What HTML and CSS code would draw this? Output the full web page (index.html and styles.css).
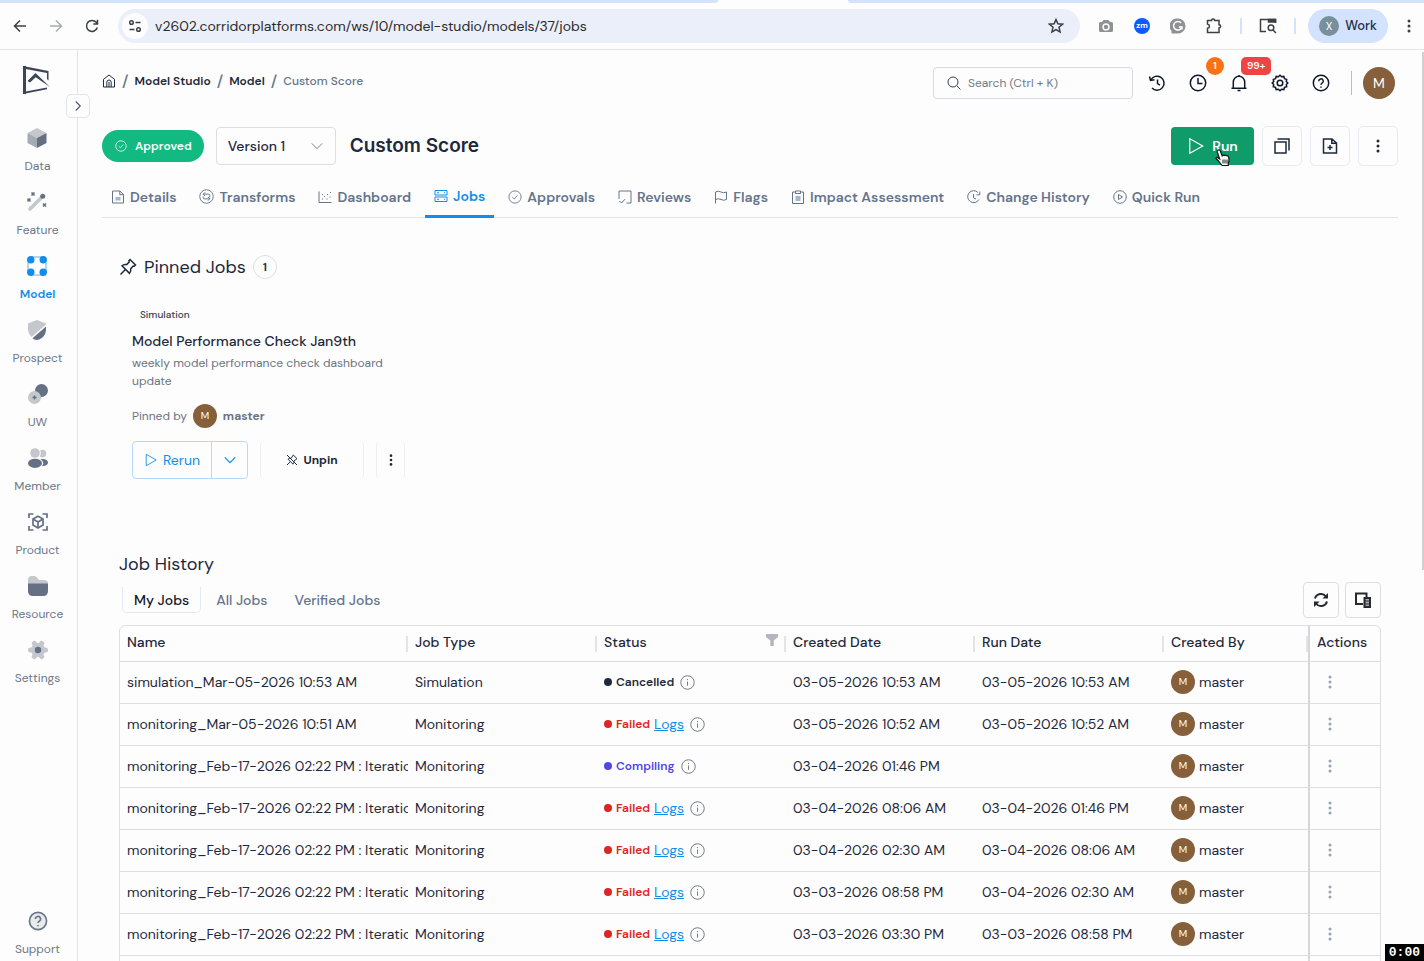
FILE: index.html
```html
<!DOCTYPE html>
<html lang="en">
<head>
    <meta charset="UTF-8">
    <meta name="viewport" content="width=device-width, initial-scale=1.0">
    <title>Custom Score - Jobs</title>
    <link rel="stylesheet" href="styles.css">
</head>
<body>
    <!-- Shared icons -->
    <svg class="sprite" aria-hidden="true">
        <symbol id="i-dots" viewBox="0 0 16 16"><g fill="currentColor" stroke="none"><circle cx="8" cy="3" r="1.5"/><circle cx="8" cy="8" r="1.5"/><circle cx="8" cy="13" r="1.5"/></g></symbol>
        <symbol id="i-info" viewBox="0 0 16 16"><circle cx="8" cy="8" r="7.200"/><path d="M8 7v4.500M8 4.300v1.200"/></symbol>
        <symbol id="i-check" viewBox="0 0 16 16"><circle cx="8" cy="8" r="7"/><path d="M5 8.300l2.200 2 3.800-4.300"/></symbol>
        <symbol id="i-play" viewBox="0 0 16 16"><path d="M2.500 1.500v13L14 8z"/></symbol>
        <symbol id="i-chevron" viewBox="0 0 16 16"><path d="M2 5l6 6 6-6"/></symbol>
        <symbol id="i-help" viewBox="0 0 18 18"><circle cx="9" cy="9" r="7.700"/><path d="M6.700 7.200a2.300 2.300 0 1 1 3.400 2c-.8.500-1.100.8-1.100 1.600M9 12.500v1.300"/></symbol>
        <symbol id="i-pin" viewBox="0 0 18 18"><path d="M11 1.500l5.500 5.500-1.300 1.200-.9-.2-2.600 2.700c.4 1.800 0 3.300-1.200 4.600L3 7.800c1.300-1.200 2.800-1.600 4.600-1.200L10.200 4 9.900 2.700zM6.400 11.500L1.500 16.500"/></symbol>
    </svg>

    <!-- Browser bar -->
    <div class="tab-strip"><span class="strip-left"></span><span class="strip-tab"></span><span class="strip-right"></span></div>
    <div class="toolbar">
        <button class="tool-btn" aria-label="Back"><svg class="icon s16 bold" viewBox="0 0 16 16"><path d="M14 8H2.500M8 2.500L2.500 8 8 13.500"/></svg></button>
        <button class="tool-btn dim" aria-label="Forward"><svg class="icon s16 bold" viewBox="0 0 16 16"><path d="M2 8h11.500M8 2.500L13.500 8 8 13.500"/></svg></button>
        <button class="tool-btn" aria-label="Reload"><svg class="icon s16 bold" viewBox="0 0 16 16"><path d="M13.300 9.500A5.500 5.500 0 1 1 12.200 4.300L13.500 5.800M13.500 1.800v4.200H9.300"/></svg></button>
        <div class="address">
            <span class="site-info"><svg class="icon s16 bold" viewBox="0 0 16 16"><circle cx="4.500" cy="4.500" r="1.800"/><path d="M8.500 4.500h5M2.500 11.500h5"/><circle cx="11.500" cy="11.500" r="1.800"/></svg></span>
            <input class="url" type="text" aria-label="Address" value="v2602.corridorplatforms.com/ws/10/model-studio/models/37/jobs">
            <svg class="icon s16 bold" viewBox="0 0 16 16"><path d="M8 1.500l1.900 4.300 4.700.4-3.600 3.100 1.100 4.600L8 11.500l-4.100 2.400L5 9.300 1.400 6.200l4.700-.4z"/></svg>
        </div>
        <div class="extensions">
            <button class="tool-btn" aria-label="Screenshot"><svg class="s16" viewBox="0 0 16 16"><path fill="#8f9194" fill-rule="evenodd" d="M5.500 2h5L12 4h1.500Q15 4 15 5.500v7q0 1.500-1.500 1.500h-11Q1 14 1 12.500v-7Q1 4 2.500 4H4zM8 5.200a3.700 3.700 0 1 0 0 7.400 3.700 3.700 0 0 0 0-7.400z"/><circle cx="8" cy="9" r="2.200" fill="#8f9194"/></svg></button>
            <button class="tool-btn" aria-label="Zoom"><span class="zoom-logo">zm</span></button>
            <button class="tool-btn" aria-label="Grammar"><svg class="s16" viewBox="0 0 16 16"><path fill="#8f9194" d="M8 .5A7.500 7.500 0 1 1 8 15.500H1.500V13A7.500 7.500 0 0 1 8 .5z"/><path fill="none" stroke="#fff" stroke-width="1.500" d="M11.200 5A4.300 4.300 0 1 0 12 9H8.800M12 9v2.500"/></svg></button>
            <button class="tool-btn" aria-label="Extensions"><svg class="icon s18 bold" viewBox="0 0 18 18"><path d="M2.500 3.500h4a1.600 1.600 0 0 1 3.200 0H14v4.200a1.600 1.600 0 0 1 0 3.200v4.600H2.500v-4.200c2.600-.4 2.600-3.700 0-4.200z"/></svg></button>
            <span class="tool-sep"></span>
            <button class="tool-btn" aria-label="Search tabs"><svg class="icon s18 bold" viewBox="0 0 18 18"><path d="M7 14.500H1.500v-12h15V6"/><path d="M9.500 2.500h7V5h-7z" fill="currentColor"/><circle cx="12" cy="10.800" r="2.800"/><path d="M14 13l3 3"/></svg></button>
            <span class="tool-sep"></span>
            <button class="profile"><span class="profile-pic">X</span>Work</button>
            <button class="tool-btn slim" aria-label="Browser menu"><svg class="icon s16"><use href="#i-dots"/></svg></button>
        </div>
    </div>

    <div class="app">
        <!-- Sidebar -->
        <nav class="sidebar">
            <svg class="logo" viewBox="0 0 28 30"><path fill="none" stroke="#3b4758" stroke-width="3" d="M2.500 1v28"/><path fill="#3b4758" d="M1 1l25.500 5v9.500L25 14V8L1 3.500zM1 27l24-4.500v1.800L1 29zM5.500 16L13.500 8 28 22 13.700 12.200 8 17.500z"/></svg>
            <button class="collapse" aria-label="Expand menu"><svg class="icon s12 turn bold"><use href="#i-chevron"/></svg></button>
            <a class="side-item" href="#">
                <svg class="s20" viewBox="0 0 20 20"><path fill="#c4c7cc" d="M10 0l9.500 5L10 10 .5 5z"/><path fill="#a5abb4" d="M.5 5L10 10v10L.5 15z"/><path fill="#667085" d="M19.500 5L10 10v10l9.500-5z"/></svg>
                Data
            </a>
            <a class="side-item" href="#">
                <svg class="s20" viewBox="0 0 20 20"><path stroke="#c4c7cc" stroke-width="3.600" stroke-linecap="round" d="M3 17L14 6"/><circle cx="15.700" cy="4.300" r="2.500" fill="#667085"/><path stroke="#667085" stroke-width="1.600" d="M4.500.5l3 3M7.500.5l-3 3M.5 6.500l3 3M3.500 6.500l-3 3M16 11.500l3 3M19 11.500l-3 3"/></svg>
                Feature
            </a>
            <a class="side-item active" href="#">
                <svg class="s20" viewBox="0 0 20 20"><path fill="none" stroke="#93c9f5" stroke-width="1.500" d="M3.500 1h13M3.500 19h13M1 4v12M19 4v12"/><g fill="#118dea"><circle cx="3.800" cy="3.800" r="3.700"/><circle cx="16.200" cy="3.800" r="3.700"/><circle cx="3.800" cy="16.200" r="3.700"/><circle cx="16.200" cy="16.200" r="3.700"/></g></svg>
                Model
            </a>
            <a class="side-item" href="#">
                <svg class="s20" viewBox="0 0 20 20"><path fill="#c4c7cc" d="M10 0l8 3q1 .4 1 1.500L4.500 17C1.500 14 1 11 1 9V4.500Q1 3.400 2 3z"/><path fill="#667085" d="M19 6.500V9c0 5-3 10-9 11-2 0-3.500-.8-4.500-1.700z"/></svg>
                Prospect
            </a>
            <a class="side-item" href="#">
                <svg class="s20" viewBox="0 0 20 20"><circle cx="13.500" cy="6.500" r="6.500" fill="#667085"/><circle cx="6.500" cy="13.500" r="6.500" fill="#c4c7cc"/><path stroke="#667085" stroke-width="1.400" d="M6.500 11.500v4M4.500 13.500h4"/></svg>
                UW
            </a>
            <a class="side-item" href="#">
                <svg class="s20" viewBox="0 0 20 20"><circle cx="14.500" cy="5.500" r="3.800" fill="#c4c7cc"/><ellipse cx="15" cy="14.500" rx="5" ry="3.600" fill="#667085"/><ellipse cx="7" cy="15.300" rx="8.200" ry="5.500" fill="#fdfdfd"/><circle cx="7" cy="5" r="5.800" fill="#fdfdfd"/><circle cx="7" cy="5" r="4.800" fill="#c4c7cc"/><ellipse cx="7" cy="15.300" rx="7" ry="4.600" fill="#667085"/></svg>
                Member
            </a>
            <a class="side-item" href="#">
                <svg class="s20" viewBox="0 0 20 20" fill="none" stroke="#667085" stroke-width="1.700"><path d="M1 6V2h4.500M14.500 2H19v4M19 14v4h-4.500M5.500 18H1v-4"/><path d="M10 4.200l5 2.800v6l-5 2.900L5 13V7z"/><path d="M5 7l5 3 5-3M10 10v6"/></svg>
                Product
            </a>
            <a class="side-item" href="#">
                <svg class="s20" viewBox="0 0 20 20"><path fill="#c4c7cc" d="M0 8V4q0-4 4-4h2.500q1.500 0 2.500 1.500L11 4h5q4 0 4 4z"/><path fill="#667085" d="M0 7.500h20V15q0 5-5 5H5q-5 0-5-5z"/></svg>
                Resource
            </a>
            <a class="side-item" href="#">
                <svg class="s20" viewBox="0 0 20 20"><circle cx="10" cy="10" r="7" fill="#c4c7cc"/><path stroke="#c4c7cc" stroke-width="5" stroke-linecap="round" d="M2.500 10h15M6.300 3.400l7.400 13.200M13.700 3.400L6.300 16.600"/><circle cx="10" cy="10" r="3.200" fill="#667085"/></svg>
                Settings
            </a>
            <a class="side-item support" href="#">
                <svg class="icon s20 help"><use href="#i-help"/></svg>
                Support
            </a>
        </nav>

        <main class="main">
            <div class="topbar">
                <nav class="breadcrumb">
                    <a href="#" aria-label="Home"><svg class="icon s14" viewBox="0 0 14 14"><path d="M1.500 5.300L7 1l5.500 4.300V13h-11zM4.800 13V8.200Q4.800 6 7 6t2.200 2.200V13M7 8v5"/></svg></a>
                    <span class="slash">/</span><a href="#">Model Studio</a>
                    <span class="slash">/</span><a href="#">Model</a>
                    <span class="slash">/</span><span>Custom Score</span>
                </nav>
                <label class="search">
                    <svg class="icon s14" viewBox="0 0 14 14"><circle cx="6" cy="6" r="5"/><path d="M9.800 9.800L13.500 13.500"/></svg>
                    <input type="text" placeholder="Search (Ctrl + K)" aria-label="Search">
                </label>
                <div class="top-icons">
                    <button aria-label="Recent"><svg class="icon s18 bold" viewBox="0 0 18 18"><path d="M2.800 6A7 7 0 1 1 4 14M1.500 2.500L2.500 6.500l4-.7M9.500 5.500v4.200l2.500 1.500"/></svg></button>
                    <button aria-label="Running jobs"><svg class="icon s18 bold" viewBox="0 0 18 18"><circle cx="9" cy="9" r="7.700"/><path d="M9 4v5.500h4.500"/></svg><span class="badge orange">1</span></button>
                    <button aria-label="Notifications"><svg class="icon s18 bold" viewBox="0 0 18 18"><path d="M1.500 14.200h15M3.300 14V8a5.700 5.700 0 0 1 11.400 0v6M9 1v1.500M7.500 16.500h3"/></svg><span class="badge red">99+</span></button>
                    <button aria-label="Settings"><svg class="icon s18 bold" viewBox="0 0 18 18"><path d="M7.400 2.800L9 1.200l1.600 1.600 2.200-.4.700 2.200 2.200.8-.4 2.100L16.800 9l-1.500 1.500.4 2.200-2.200.7-.7 2.200-2.200-.4L9 16.800l-1.600-1.600-2.200.4-.7-2.200-2.200-.7.4-2.200L1.200 9l1.500-1.500-.4-2.100 2.200-.8.700-2.200z"/><circle cx="9" cy="9" r="2.800"/></svg></button>
                    <button aria-label="Help"><svg class="icon s18 bold"><use href="#i-help"/></svg></button>
                </div>
                <span class="avatar large">M</span>
            </div>

            <div class="title-row">
                <span class="approved"><svg class="icon s12"><use href="#i-check"/></svg>Approved</span>
                <div class="version">
                    <select aria-label="Version"><option>Version 1</option></select>
                    <svg class="icon s14"><use href="#i-chevron"/></svg>
                </div>
                <h1>Custom Score</h1>
                <div class="title-actions">
                    <button class="run"><svg class="icon s18"><use href="#i-play"/></svg>Run
                        <svg class="cursor" viewBox="0 0 16 18"><path fill="#fff" stroke="#111" stroke-width="1.200" d="M3 1.200q1.500-.8 2.200.6l2 5q.8-1.300 2-.3 1-.9 2 .2 1.200-.6 2 .6.800 1.500.8 3.500 0 2-.7 3.200v2.500H7L3.500 12 1 9.500q.2-1.700 2-.8l1.600 1.200L2.300 3Q2 1.700 3 1.200z"/><path stroke="#111" d="M8 10.500v4M10 10.500v4M12 10.500v4"/></svg>
                    </button>
                    <button class="square" aria-label="Duplicate"><svg class="icon s16 bold" viewBox="0 0 16 16"><path d="M1 4h11v11H1zM3.500 1H15v11.500"/></svg></button>
                    <button class="square" aria-label="New file"><svg class="icon s16 bold" viewBox="0 0 16 16"><path d="M1.500 1H10l4.500 4v10h-13zM9.800 1v4.200h4.700M8 7v5M5.500 9.500h5"/></svg></button>
                    <button class="square" aria-label="More"><svg class="icon s16"><use href="#i-dots"/></svg></button>
                </div>
            </div>

            <nav class="tabs">
                <a href="#"><svg class="icon s14" viewBox="0 0 14 14"><path d="M1.500 1H9l3.500 3.500V13h-11zM8.800 1v3.700h3.700"/><path d="M4.500 7h5v3.500h-5z" fill="#a9b4c4" stroke="none"/></svg>Details</a>
                <a href="#"><svg class="icon s15" viewBox="0 0 16 16"><circle cx="8" cy="8" r="7.200"/><path d="M6.500 3.500l-2 2 2 2M4.500 5.500h6q1 0 1 1V9M9.500 8.500l2 2-2 2M11.500 10.500h-6q-1 0-1-1V8"/></svg>Transforms</a>
                <a href="#"><svg class="icon s14" viewBox="0 0 14 14"><path d="M1 1.500v11h12.500M4 9h1M6 6.500h1M8.500 9h1M4 4.500h1M9 4.500h1M11.500 7h1M12 2.500h1"/></svg>Dashboard</a>
                <a class="active" href="#"><svg class="icon s14" viewBox="0 0 14 14"><path d="M1 1.500h12V6H1zM1 8h12v4.500H1zM3 3.800h2M10 3.800h1M3 10.300h2M10 10.300h1"/></svg>Jobs</a>
                <a href="#"><svg class="icon s14"><use href="#i-check"/></svg>Approvals</a>
                <a href="#"><svg class="icon s14" viewBox="0 0 14 14"><path d="M1 9V1h12v12H8.500M1.500 11l2 2 3.500-3.800"/></svg>Reviews</a>
                <a href="#"><svg class="icon s14" viewBox="0 0 14 14"><path d="M1.500 13.500V2Q4.500.5 7 2t5.500 0v7.500Q9.500 11 7 9.500T1.500 9.500"/></svg>Flags</a>
                <a href="#"><svg class="icon s14" viewBox="0 0 14 14"><path d="M4.500 2h-3v11.500h11V2h-3M4.500 1h5v2.500h-5z"/><path d="M4.500 6h5v5h-5z" fill="#a9b4c4" stroke="none"/></svg>Impact Assessment</a>
                <a href="#"><svg class="icon s14" viewBox="0 0 14 14"><path d="M12 9.500A6 6 0 1 1 11 2.500M12.800 1.500v3.300H9.500M6.500 4v3.800l2.500 1.200"/></svg>Change History</a>
                <a href="#"><svg class="icon s14" viewBox="0 0 14 14"><circle cx="7" cy="7" r="6.300"/><path d="M5.500 4.500v5L9.500 7z"/></svg>Quick Run</a>
            </nav>

            <!-- Pinned jobs -->
            <section class="pinned">
                <h2><svg class="icon s18 bold"><use href="#i-pin"/></svg>Pinned Jobs<span class="count">1</span></h2>
                <div class="pin-card">
                    <span class="tag">Simulation</span>
                    <h3>Model Performance Check Jan9th</h3>
                    <p>weekly model performance check dashboard update</p>
                    <div class="pinned-by">Pinned by<span class="avatar">M</span><strong>master</strong></div>
                    <div class="pin-actions">
                        <div class="split">
                            <button><svg class="icon s14"><use href="#i-play"/></svg>Rerun</button>
                            <button aria-label="Rerun options"><svg class="icon s14 bold"><use href="#i-chevron"/></svg></button>
                        </div>
                        <button class="ghost unpin"><svg class="icon s12 bold" viewBox="0 0 18 18"><path d="M11 1.500l5.500 5.500-4.800 3.700c.4 1.800 0 3.300-1.200 4.600L3 7.800c1.300-1.200 2.800-1.600 4.600-1.200zM6.400 11.500L1.500 16.500M1.500 1.500l15 15"/></svg>Unpin</button>
                        <button class="ghost" aria-label="More"><svg class="icon s14"><use href="#i-dots"/></svg></button>
                    </div>
                </div>
            </section>

            <!-- Job history -->
            <section class="history">
                <h2>Job History</h2>
                <div class="history-bar">
                    <button class="filter active">My Jobs</button>
                    <button class="filter">All Jobs</button>
                    <button class="filter">Verified Jobs</button>
                    <div class="history-tools">
                        <button aria-label="Refresh"><svg class="icon s16 heavy" viewBox="0 0 16 16"><path d="M2 6.500A6.200 6.200 0 0 1 13 4.500M14 9.500A6.200 6.200 0 0 1 3 11.500"/><path d="M15 1v5.500H9.500zM1 15V9.500h5.500z" fill="currentColor" stroke="none"/></svg></button>
                        <button aria-label="Columns"><svg class="icon s16 heavy" viewBox="0 0 16 16"><path d="M8 12H1V1.500h10.500V5"/><path d="M9.500 6h5.500v9H9.500z" fill="#a9abae"/><path d="M10 9h5M10 12h5" stroke-width="1"/></svg></button>
                    </div>
                </div>
                <div class="table-wrap">
                    <table>
                        <colgroup><col><col class="mid"><col class="mid"><col class="mid"><col class="mid"><col class="by"><col class="act"></colgroup>
                        <thead>
                            <tr>
                                <th>Name</th>
                                <th>Job Type</th>
                                <th>Status<svg class="funnel" viewBox="0 0 12 12"><path fill="#b3b7bd" d="M0 0h12v3L7.800 6.500V12H4.300V6.500L0 3z"/></svg></th>
                                <th>Created Date</th>
                                <th>Run Date</th>
                                <th>Created By</th>
                                <th class="actions">Actions</th>
                            </tr>
                        </thead>
                        <tbody id="jobs"></tbody>
                    </table>
                </div>
            </section>
        </main>
    </div>
    <span class="scroll-thumb"></span>
    <span class="timer">0:00</span>

    <script>
        const iteration = 'monitoring_Feb-17-2026 02:22 PM : Iteration';
        const jobs = [
            ['simulation_Mar-05-2026 10:53 AM', 'Simulation', 'Cancelled', '03-05-2026 10:53 AM', '03-05-2026 10:53 AM'],
            ['monitoring_Mar-05-2026 10:51 AM', 'Monitoring', 'Failed', '03-05-2026 10:52 AM', '03-05-2026 10:52 AM'],
            [iteration, 'Monitoring', 'Compiling', '03-04-2026 01:46 PM', ''],
            [iteration, 'Monitoring', 'Failed', '03-04-2026 08:06 AM', '03-04-2026 01:46 PM'],
            [iteration, 'Monitoring', 'Failed', '03-04-2026 02:30 AM', '03-04-2026 08:06 AM'],
            [iteration, 'Monitoring', 'Failed', '03-03-2026 08:58 PM', '03-04-2026 02:30 AM'],
            [iteration, 'Monitoring', 'Failed', '03-03-2026 03:30 PM', '03-03-2026 08:58 PM']
        ];

        document.getElementById('jobs').innerHTML = jobs.map(([name, type, status, created, run]) => `
            <tr>
                <td>${name}</td>
                <td>${type}</td>
                <td><div class="status ${status.toLowerCase()}">
                    <b>${status}</b>${status === 'Failed' ? '<a href="#">Logs</a>' : ''}
                    <svg class="icon s15"><use href="#i-info"/></svg>
                </div></td>
                <td>${created}</td>
                <td>${run}</td>
                <td><div class="person"><span class="avatar">M</span>master</div></td>
                <td class="actions"><button aria-label="Job menu"><svg class="icon s16"><use href="#i-dots"/></svg></button></td>
            </tr>
        `).join('') + '<tr><td></td><td></td><td></td><td></td><td></td><td></td><td class="actions"></td></tr>';
    </script>
</body>
</html>
```

FILE: styles.css
```css
* {
    margin: 0;
    padding: 0;
    box-sizing: border-box;
}

body {
    display: flex;
    flex-direction: column;
    height: 100vh;
    overflow: hidden;
    font-family: "DM Sans", Inter, "Liberation Sans", sans-serif;
    font-size: 14px;
    line-height: 20px;
    color: #1e293b;
    background-color: #fdfdfd;
}

button, input, select {
    font: inherit;
    color: inherit;
    background: none;
    border: none;
    outline: none;
}

button {
    display: inline-flex;
    align-items: center;
    justify-content: center;
    cursor: pointer;
}

a {
    color: inherit;
    text-decoration: none;
}

svg {
    display: block;
    flex: none;
}

.sprite {
    position: absolute;
    width: 0;
    height: 0;
}

.icon {
    fill: none;
    stroke: currentColor;
    stroke-width: 1;
}

.bold { stroke-width: 1.5; }
.heavy { stroke-width: 2; }
.turn { transform: rotate(-90deg); }

.s12 { width: 12px; height: 12px; }
.s14 { width: 14px; height: 14px; }
.s15 { width: 15px; height: 15px; }
.s16 { width: 16px; height: 16px; }
.s18 { width: 18px; height: 18px; }
.s20 { width: 20px; height: 20px; }

/* Browser bar */
.tab-strip {
    display: flex;
    flex: none;
    height: 3px;
    background-color: #fdfdfd;
}

.strip-left { flex: 1; background-color: #d3e3fd; border-bottom-right-radius: 3px; }
.strip-tab { width: 130px; }
.strip-right { width: 576px; background-color: #d3e3fd; border-bottom-left-radius: 3px; }

.toolbar {
    display: flex;
    flex: none;
    align-items: center;
    height: 47px;
    padding-left: 2px;
    border-bottom: 1px solid #e3e4e6;
    color: #3c4043;
}

.tool-btn { width: 36px; height: 36px; }
.tool-btn.dim { color: #a9abae; }
.tool-btn.slim { width: 30px; }

.address {
    display: flex;
    flex: 1;
    align-items: center;
    height: 34px;
    margin: 0 8px;
    padding: 0 16px 0 4px;
    border-radius: 17px;
    background-color: #ebeff9;
}

.site-info {
    display: flex;
    align-items: center;
    justify-content: center;
    width: 26px;
    height: 26px;
    border-radius: 50%;
    background-color: #fdfdfd;
}

.url {
    flex: 1;
    padding: 0 7px;
    color: #2a2b2e;
}

.extensions {
    display: flex;
    align-items: center;
}

.zoom-logo {
    width: 16px;
    height: 16px;
    border-radius: 50%;
    background-color: #0b5cff;
    color: #fff;
    font-size: 8px;
    font-weight: 700;
    line-height: 15px;
}

.tool-sep {
    width: 2px;
    height: 16px;
    margin: 0 8px;
    background-color: #d3e3fd;
}

.profile {
    gap: 6px;
    width: 80px;
    height: 34px;
    margin: 0 6px 0 4px;
    border-radius: 17px;
    background-color: #d3e3fd;
    color: #1c2b4a;
    font-size: 13px;
    font-weight: 500;
}

.profile-pic {
    width: 20px;
    border-radius: 50%;
    background-color: #78909c;
    color: #fff;
    font-size: 11px;
    font-weight: 400;
}

.app {
    display: flex;
    flex: 1;
    min-height: 0;
}

/* Sidebar */
.sidebar {
    position: relative;
    display: flex;
    flex: none;
    flex-direction: column;
    align-items: center;
    gap: 18px;
    width: 78px;
    padding: 15px 2px 4px 0;
    border-right: 1px solid #e3e5e8;
}

.logo {
    width: 28px;
    height: 30px;
    margin: 0 4px 15px 0;
}

.collapse {
    position: absolute;
    top: 44px;
    right: -13px;
    width: 24px;
    height: 24px;
    border: 1px solid #e3e5e8;
    border-radius: 5px;
    background-color: #fdfdfd;
    color: #475569;
}

.side-item {
    display: flex;
    flex-direction: column;
    align-items: center;
    gap: 10px;
    color: #6b7688;
    font-size: 12px;
    line-height: 16px;
}

.side-item.active {
    color: #118dea;
    font-weight: 600;
}

.side-item.support { margin-top: auto; }
.help { fill: #e8eaed; stroke-width: 1.5; }

/* Header */
.main {
    flex: 1;
    min-width: 0;
    padding: 17px 26px 0 24px;
    overflow: hidden;
}

.topbar {
    display: flex;
    align-items: center;
}

.breadcrumb {
    display: flex;
    flex: 1;
    align-items: center;
    gap: 6px;
    padding-bottom: 4px;
    color: #64748b;
    font-size: 12px;
    font-weight: 500;
}

.breadcrumb a {
    color: #1e293b;
    font-weight: 600;
}

.slash { font-size: 16px; }

.search {
    display: flex;
    align-items: center;
    gap: 7px;
    width: 200px;
    height: 32px;
    padding: 0 13px;
    border: 1px solid #d6d9dd;
    border-radius: 4px;
    color: #334155;
    font-size: 12px;
}

.search input {
    flex: 1;
    min-width: 0;
}

.search input::placeholder { color: #727b88; }

.top-icons {
    display: flex;
    gap: 23px;
    padding: 7px 21px 7px 15px;
    color: #0f172a;
}

.top-icons button { position: relative; }

.badge {
    position: absolute;
    bottom: 17px;
    left: 17px;
    min-width: 18px;
    padding: 0 5px;
    border-radius: 9px;
    color: #fff;
    font-size: 10px;
    font-weight: 600;
    line-height: 18px;
}

.badge.orange { background-color: #f97316; }
.badge.red { left: 11px; padding: 0 6px; border-radius: 5px; background-color: #ef4444; }

.avatar {
    display: inline-block;
    width: 24px;
    border-radius: 50%;
    background-color: #85603b;
    color: #fff;
    font-size: 10px;
    font-weight: 400;
    line-height: 24px;
    text-align: center;
}

.avatar.large {
    position: relative;
    width: 32px;
    margin: 0 3px 0 12px;
    font-size: 14px;
    line-height: 32px;
}

.avatar.large::before {
    content: "";
    position: absolute;
    top: 4px;
    left: -12px;
    height: 24px;
    border-left: 1px solid #b8bfc9;
}

.title-row {
    display: flex;
    align-items: center;
    margin-top: 27px;
}

.approved {
    display: flex;
    align-items: center;
    gap: 8px;
    height: 32px;
    padding: 0 12px 0 13px;
    border-radius: 16px;
    background-color: #12b981;
    color: #fff;
    font-size: 12px;
    font-weight: 600;
}

.version {
    display: flex;
    align-items: center;
    width: 120px;
    height: 38px;
    margin: 0 14px 0 12px;
    padding-right: 11px;
    border: 1px solid #dcdee1;
    border-radius: 4px;
    color: #64748b;
}

.version select {
    flex: 1;
    min-width: 0;
    height: 36px;
    margin-right: -14px;
    padding-left: 11px;
    appearance: none;
    color: #1e293b;
    font-weight: 500;
}

h1 {
    font-family: Inter, sans-serif;
    font-size: 19px;
    font-weight: 600;
}

.title-actions {
    display: flex;
    align-items: center;
    gap: 8px;
    margin-left: auto;
}

.run {
    position: relative;
    gap: 7px;
    width: 83px;
    height: 38px;
    border-radius: 4px;
    background-color: #109b6b;
    color: #fff;
    font-weight: 600;
}

.cursor {
    position: absolute;
    top: 22px;
    left: 44px;
    width: 16px;
    height: 18px;
}

.square {
    width: 40px;
    height: 40px;
    border: 1px solid #e8ebef;
    border-radius: 5px;
}

.tabs {
    display: flex;
    gap: 5px;
    margin-top: 10px;
    border-bottom: 1px solid #e2e4ec;
}

.tabs a {
    display: flex;
    align-items: center;
    gap: 5px;
    height: 42px;
    margin-bottom: -1px;
    padding: 0 9px 1px;
    color: #64748b;
    font-weight: 600;
    white-space: nowrap;
}

.tabs .active {
    padding-bottom: 0;
    border-bottom: 3px solid #118dea;
    color: #118dea;
}

/* Pinned jobs */
.pinned, .history { padding: 0 17px; }
.pinned { margin-top: 37px; }

h2 {
    display: flex;
    align-items: center;
    gap: 7px;
    font-size: 18px;
    font-weight: 400;
    line-height: 24px;
}

.count {
    width: 24px;
    border: 1px solid #dcdfe4;
    border-radius: 50%;
    font-size: 12px;
    font-weight: 600;
    line-height: 22px;
    text-align: center;
}

.pin-card {
    width: 300px;
    margin-top: 28px;
    padding: 0 13px;
}

.tag {
    display: block;
    padding: 0 8px;
    color: #334155;
    font-size: 10px;
    font-weight: 500;
    line-height: 16px;
}

h3 {
    margin: 8px 0 3px;
    font-size: 14px;
    font-weight: 500;
    line-height: 20px;
}

.pin-card p {
    color: #6b7483;
    font-size: 12px;
    line-height: 18px;
}

.pinned-by {
    display: flex;
    align-items: center;
    gap: 6px;
    margin: 14px 0 13px;
    color: #6b7483;
    font-size: 12px;
}

.pinned-by strong { font-weight: 700; }

.pin-actions {
    display: flex;
    gap: 12px;
}

.split {
    display: flex;
    flex: none;
    border: 1px solid #b5d9fa;
    border-radius: 4px;
    color: #118dea;
}

.split button {
    gap: 5px;
    width: 35px;
    height: 36px;
}

.split button:first-child {
    width: 79px;
    border-right: 1px solid #b5d9fa;
}

.ghost {
    flex: none;
    width: 29px;
    border-right: 1px solid #eceef0;
    border-left: 1px solid #eceef0;
    border-radius: 5px;
}

.ghost.unpin {
    gap: 5px;
    width: 104px;
    font-size: 12px;
    font-weight: 700;
}

/* Job history */
.history { margin-top: 73px; }

.history-bar {
    display: flex;
    align-items: center;
    margin: 6px 0 7px;
}

.filter {
    height: 26px;
    margin-left: 3px;
    padding: 0 11px;
    border: 1px solid transparent;
    border-top: none;
    border-radius: 0 0 5px 5px;
    color: #64748b;
    font-weight: 500;
}

.filter.active {
    border-color: #e5eaf2;
    color: #0f172a;
}

.history-tools {
    display: flex;
    gap: 6px;
    margin-left: auto;
}

.history-tools button {
    width: 36px;
    height: 36px;
    border: 1px solid #dddee1;
    border-radius: 4px;
    color: #27292d;
}

.table-wrap {
    border: 1px solid #dddee0;
    border-radius: 6px;
    overflow: hidden;
}

table {
    width: 100%;
    table-layout: fixed;
    border-spacing: 0;
}

.mid { width: 189px; }
.by { width: 144px; }
.act { width: 72px; }

th, td {
    height: 42px;
    padding-left: 7px;
    border-bottom: 1px solid #dddee0;
    overflow: hidden;
    text-align: left;
    white-space: nowrap;
}

td { padding-bottom: 1px; }

th {
    height: 36px;
    padding-bottom: 3px;
    background: linear-gradient(#e3e4e6, #e3e4e6) right center / 2px 16px no-repeat;
    font-weight: 500;
}

.actions { border-left: 2px solid #d5d7da; }
th.actions { background: none; }

.funnel {
    float: right;
    width: 12px;
    height: 12px;
    margin: 2px 8px 0 0;
}

.status {
    display: flex;
    align-items: center;
    gap: 4px;
    color: #1e293b;
}

.status::before {
    content: "";
    width: 8px;
    height: 8px;
    border-radius: 50%;
    background-color: currentColor;
}

.status b {
    font-size: 12px;
    font-weight: 600;
}

.status.failed { color: #dc2626; }
.status.compiling { color: #4f46e5; }

.status a {
    color: #118dea;
    text-decoration: underline;
}

.status svg {
    margin-left: 2px;
    color: #6b7483;
}

.person {
    display: flex;
    align-items: center;
    gap: 4px;
}

td button {
    width: 26px;
    height: 24px;
    color: #94a3b8;
}

.scroll-thumb {
    position: fixed;
    top: 52px;
    right: 0;
    width: 2px;
    height: 518px;
    background-color: #cfd0d2;
}

.timer {
    position: fixed;
    right: 0;
    bottom: 0;
    padding: 0 4px;
    background-color: #000;
    color: #fff;
    font-family: "Liberation Mono", monospace;
    font-size: 13px;
    font-weight: 700;
    line-height: 17px;
}
```
